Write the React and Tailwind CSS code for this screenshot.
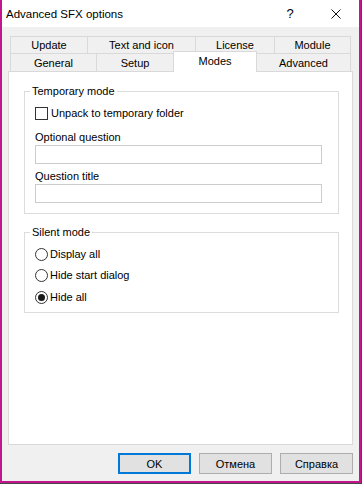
import { useState } from "react";

const topTabs = [
  { label: "Update", className: "w-[77px] border-l" },
  { label: "Text and icon", className: "w-[108px] border-l" },
  { label: "License", className: "w-[79px] border-l" },
  { label: "Module", className: "w-[77px] border-x" },
];

const bottomTabs = [
  { label: "General", className: "w-[86px] border-l" },
  { label: "Setup", className: "w-[77px] border-l" },
  { label: "Modes", className: "w-[84px] border-x" },
  { label: "Advanced", className: "w-[94px] border-r" },
];

function Checkbox({ checked, onChange, label }) {
  return (
    <label className="flex h-[16px] items-center gap-[3px]" onClick={onChange}>
      <span className="flex h-[13px] w-[13px] items-center justify-center border border-[#333333] bg-white">
        {checked && (
          <svg width="9" height="9" viewBox="0 0 9 9">
            <path d="M1 4.5l2.5 2.5L8 1.5" fill="none" stroke="#222" strokeWidth="1.3" />
          </svg>
        )}
      </span>
      <span>{label}</span>
    </label>
  );
}

function Radio({ checked, onSelect, label, className }) {
  return (
    <div className={"flex h-[16px] items-center gap-[2px] " + className} onClick={onSelect}>
      <span className="flex h-[13px] w-[13px] items-center justify-center rounded-full border border-[#333333] bg-white">
        {checked && <span className="h-[7px] w-[7px] rounded-full bg-[#1a1a1a]" />}
      </span>
      <span>{label}</span>
    </div>
  );
}

function Group({ title, children, className }) {
  return (
    <fieldset className={"w-[315px] border border-[#dcdcdc] pl-[10px] " + className}>
      <legend className="ml-[-5px] h-[16px] px-[2px] leading-[16px]">{title}</legend>
      {children}
    </fieldset>
  );
}

export default function App() {
  const [temporary, setTemporary] = useState(false);
  const [silent, setSilent] = useState("all");

  return (
    <div className="h-[484px] w-[362px] bg-[#474747] font-['Liberation_Sans',Arial,sans-serif] text-[11px] leading-[16px] text-black">
      <div className="flex h-[483px] w-[361px] flex-col border-x-2 border-b-2 border-[#c3168c] bg-[#f0f0f0]">
        <div className="flex h-[27px] items-center bg-white">
          <span className="grow pl-[4px] text-[11.5px]">Advanced SFX options</span>
          <div className="flex h-full w-[46px] items-center justify-center text-[13px]">?</div>
          <div className="flex h-full w-[46px] items-center justify-center">
            <svg width="10" height="10" viewBox="0 0 10 10">
              <path d="M0.5 0.5L9.5 9.5M9.5 0.5L0.5 9.5" stroke="#111" strokeWidth="1" />
            </svg>
          </div>
        </div>

        <div className="flex flex-col px-[6px] pt-[9px]">
          <div className="ml-[2px] flex h-[17px]">
            {topTabs.map((tab) => (
              <div
                key={tab.label}
                className={"flex items-center justify-center border-t border-[#d9d9d9] " + tab.className}
              >
                {tab.label}
              </div>
            ))}
          </div>
          <div className="relative z-10 ml-[2px] flex h-[18px] items-start">
            {bottomTabs.map((tab) =>
              tab.label === "Modes" ? (
                <div
                  key={tab.label}
                  className={"mt-[-2px] flex h-[21px] justify-center border-t border-[#d9d9d9] bg-white pt-[1px] " + tab.className}
                >
                  {tab.label}
                </div>
              ) : (
                <div
                  key={tab.label}
                  className={"flex h-[18px] items-center justify-center border-t border-[#d9d9d9] " + tab.className}
                >
                  {tab.label}
                </div>
              )
            )}
          </div>

          <div className="h-[374px] border border-[#d9d9d9] bg-white pl-[15px] pt-[11px]">
            <Group title="Temporary mode" className="pb-[10px]">
              <div className="mt-[6px]">
                <Checkbox
                  checked={temporary}
                  onChange={() => setTemporary(!temporary)}
                  label="Unpack to temporary folder"
                />
              </div>
              <div className="mt-[8px] h-[16px]">Optional question</div>
              <div className="h-[19px] w-[287px] border border-[#cccccc] bg-white" />
              <div className="mt-[4px] h-[16px]">Question title</div>
              <div className="h-[19px] w-[287px] border border-[#cccccc] bg-white" />
            </Group>

            <Group title="Silent mode" className="mt-[10px] pb-[7px]">
              <Radio
                className="mt-[6px]"
                label="Display all"
                checked={silent === "display"}
                onSelect={() => setSilent("display")}
              />
              <Radio
                className="mt-[5px]"
                label="Hide start dialog"
                checked={silent === "start"}
                onSelect={() => setSilent("start")}
              />
              <Radio
                className="mt-[6px]"
                label="Hide all"
                checked={silent === "all"}
                onSelect={() => setSilent("all")}
              />
            </Group>
          </div>

          <div className="mt-[8px] flex justify-end gap-[8px]">
            <button className="h-[21px] w-[73px] border-2 border-[#0078d7] bg-[#e1e1e1]">OK</button>
            <button className="h-[21px] w-[73px] border border-[#adadad] bg-[#e1e1e1]">Отмена</button>
            <button className="h-[21px] w-[73px] border border-[#adadad] bg-[#e1e1e1]">Справка</button>
          </div>
        </div>
      </div>
    </div>
  );
}
